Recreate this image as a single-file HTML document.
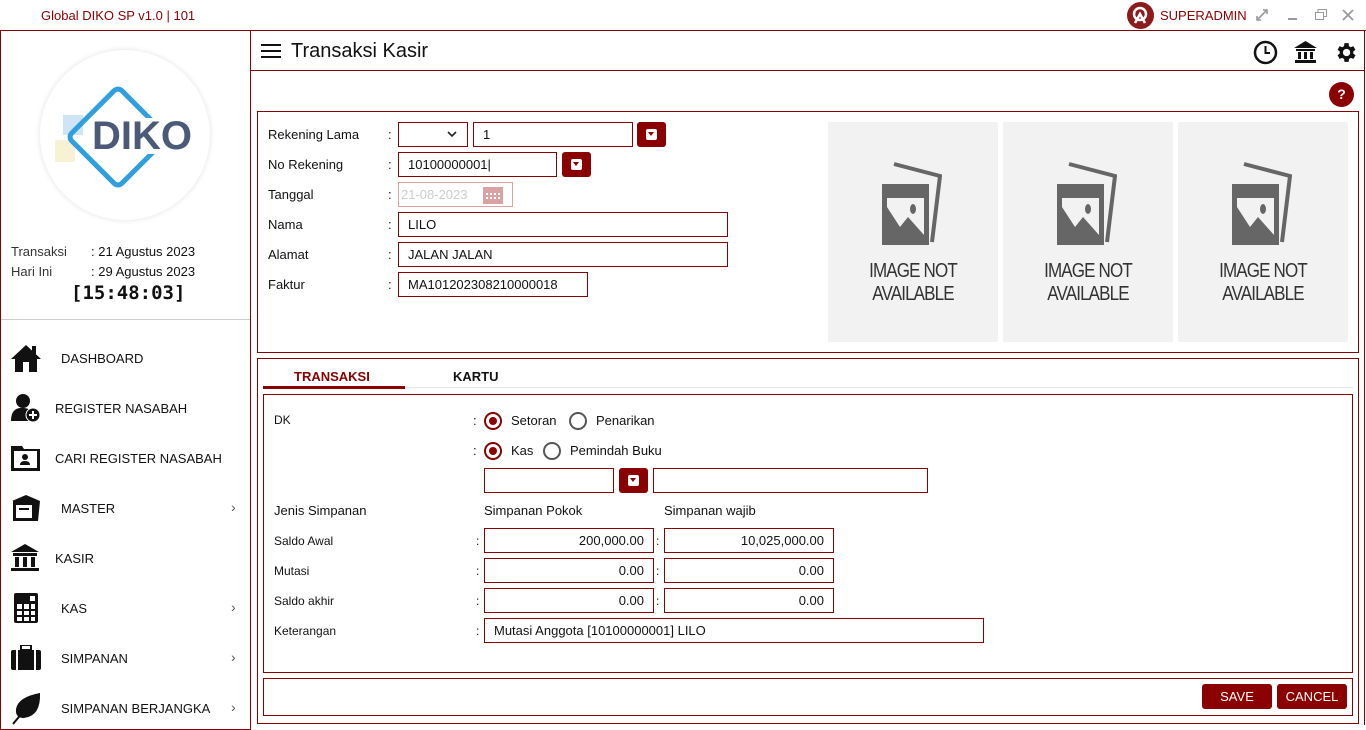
<!DOCTYPE html>
<html><head><meta charset="utf-8">
<style>
*{box-sizing:border-box;margin:0;padding:0}
body{width:1366px;height:725px;overflow:hidden;background:#fff;font-family:"Liberation Sans",sans-serif;font-size:13px;color:#111;position:relative}
.a{position:absolute}
.box{position:absolute;border:1px solid #8b0000;background:#fff}
.inp{position:absolute;border:1px solid #8b0000;background:#fff;height:25px;line-height:23px;padding:0 9px;font-size:13px;color:#111}
.r{text-align:right}
.btn{position:absolute;background:#8b0000;border-radius:3px;width:29px;height:25px}
.btn::after{content:"";position:absolute;left:9px;top:7px;width:11px;height:11px;background:#fff;border-radius:2px}
.btn i{position:absolute;left:11px;top:10px;width:0;height:0;border-left:3.5px solid transparent;border-right:3.5px solid transparent;border-top:4px solid #8b0000;z-index:2}
.lbl{position:absolute;font-size:13px}
.sm{font-size:12px}
.menu{position:absolute;left:0;font-size:13px;color:#111}
.chev{position:absolute;left:231px;color:#555;font-size:14px}
.radio{position:absolute;width:18px;height:18px;border-radius:50%;border:2px solid #8b0000}
.radio.on::after{content:"";position:absolute;left:3px;top:3px;width:8px;height:8px;border-radius:50%;background:#8b0000}
.radio.off{border-color:#555}
.ph{position:absolute;top:122px;width:170px;height:220px;background:#f2f2f2;text-align:center}
.ph .t{position:absolute;left:0;width:100%;top:138px;font-size:20px;line-height:23px;color:#333;letter-spacing:-1px;transform:scaleX(.85)}
</style></head><body>
<!-- title bar -->
<div class="a" style="left:41px;top:8px;color:#8b0000;font-size:13px">Global DIKO SP v1.0 | 101</div>
<div class="a" style="left:1127px;top:2px;width:27px;height:27px;border-radius:50%;background:#8e1b1b"></div>
<svg class="a" style="left:1130px;top:5px" width="21" height="21" viewBox="0 0 21 21"><circle cx="10" cy="9" r="6" fill="none" stroke="#fff" stroke-width="2.5"/><path d="M5 18 L10 9 L15 18" fill="none" stroke="#fff" stroke-width="2.5"/></svg>
<div class="a" style="left:1160px;top:8px;color:#8b0000;font-size:13px">SUPERADMIN</div>
<svg class="a" style="left:1256px;top:9px" width="12" height="12" viewBox="0 0 12 12"><path d="M1 11 L11 1 M7 1 H11 V5 M1 7 V11 H5" stroke="#999" stroke-width="1.6" fill="none"/></svg>
<div class="a" style="left:1288px;top:18px;width:9px;height:2px;background:#999"></div>
<svg class="a" style="left:1315px;top:9px" width="12" height="11"><rect x="0.5" y="3.5" width="8" height="7" fill="none" stroke="#999"/><path d="M3 3.5 V0.5 H11.5 V7.5 H8.5" fill="none" stroke="#999"/></svg>
<svg class="a" style="left:1342px;top:9px" width="12" height="12"><path d="M1 1 L11 11 M11 1 L1 11" stroke="#999" stroke-width="1.8"/></svg>

<!-- sidebar -->
<div class="a" style="left:0;top:30px;width:251px;height:700px;border:1px solid #8b0000"></div>
<div class="a" style="left:40px;top:50px;width:170px;height:170px;border-radius:50%;background:#fff;box-shadow:0 0 6px rgba(0,0,0,.12)"></div>
<div class="a" style="left:63px;top:115px;width:20px;height:20px;background:#cfe5f7"></div>
<div class="a" style="left:55px;top:140px;width:20px;height:22px;background:#f7f2d5"></div>
<div class="a" style="left:80px;top:99px;width:76px;height:76px;transform:rotate(45deg);border:5px solid #2f9fe0;border-radius:8px"></div>
<div class="a" style="left:91px;top:118px;font-size:40px;line-height:36px;font-weight:bold;color:#4a5a78;background:#fff;padding:0 1px">DIKO</div>
<div class="a" style="left:11px;top:244px;color:#333">Transaksi</div>
<div class="a" style="left:91px;top:244px">: 21 Agustus 2023</div>
<div class="a" style="left:11px;top:264px;color:#333">Hari Ini</div>
<div class="a" style="left:91px;top:264px">: 29 Agustus 2023</div>
<div class="a" style="left:71px;top:282px;font-size:19px;font-weight:bold;font-family:'DejaVu Sans Mono','Liberation Mono',monospace">[15:48:03]</div>
<div class="a" style="left:1px;top:319px;width:249px;height:1px;background:#ccc"></div>

<!-- menu icons -->
<svg class="a" style="left:10px;top:343px" width="32" height="30" viewBox="0 0 32 30"><path d="M16 2 L31 16 L27 16 L27 29 L5 29 L5 16 L1 16 Z" fill="#111"/><rect x="22" y="3" width="4" height="8" fill="#111"/><rect x="13" y="19" width="6" height="10" fill="#fff"/></svg>
<div class="menu" style="left:61px;top:351px">DASHBOARD</div>
<svg class="a" style="left:10px;top:393px" width="32" height="30"><circle cx="13" cy="8" r="7" fill="#111"/><path d="M1 28 Q1 14 13 15 Q22 15 22 22 L22 28 Z" fill="#111"/><circle cx="23" cy="22" r="7" fill="#111" stroke="#fff" stroke-width="1"/><path d="M23 18 V26 M19 22 H27" stroke="#fff" stroke-width="2"/></svg>
<div class="menu" style="left:55px;top:401px">REGISTER NASABAH</div>
<svg class="a" style="left:10px;top:444px" width="32" height="28"><path d="M1 2 H12 L14 5 H30 V27 H1 Z" fill="#111"/><rect x="4" y="7" width="23" height="17" fill="#fff"/><circle cx="15" cy="13" r="3" fill="#111"/><path d="M10 21 Q10 17 15 17 Q20 17 20 21 Z" fill="#111"/></svg>
<div class="menu" style="left:55px;top:451px">CARI REGISTER NASABAH</div>
<svg class="a" style="left:10px;top:493px" width="32" height="30"><path d="M3 8 H30 L28 28 H3 Z" fill="#111"/><path d="M2 8 L16 2 L30 8" fill="#111"/><rect x="6" y="12" width="16" height="13" fill="#fff"/><rect x="9" y="15" width="10" height="2" fill="#111"/></svg>
<div class="menu" style="left:61px;top:501px">MASTER</div><div class="chev" style="top:499px">›</div>
<svg class="a" style="left:10px;top:543px" width="30" height="30"><path d="M15 1 L29 9 H1 Z" fill="#111"/><rect x="3" y="10" width="24" height="3" fill="#111"/><rect x="5" y="14" width="4" height="10" fill="#111"/><rect x="13" y="14" width="4" height="10" fill="#111"/><rect x="21" y="14" width="4" height="10" fill="#111"/><rect x="1" y="25" width="28" height="3" fill="#111"/></svg>
<div class="menu" style="left:55px;top:551px">KASIR</div>
<svg class="a" style="left:14px;top:593px" width="24" height="30"><rect x="0" y="0" width="24" height="30" rx="2" fill="#111"/><rect x="16" y="3" width="5" height="5" fill="#fff"/><g fill="#fff"><rect x="3" y="11" width="5" height="5"/><rect x="10" y="11" width="5" height="5"/><rect x="17" y="11" width="4" height="5"/><rect x="3" y="18" width="5" height="4"/><rect x="10" y="18" width="5" height="4"/><rect x="17" y="18" width="4" height="4"/><rect x="3" y="24" width="5" height="4"/><rect x="10" y="24" width="5" height="4"/><rect x="17" y="24" width="4" height="4"/></g></svg>
<div class="menu" style="left:61px;top:601px">KAS</div><div class="chev" style="top:599px">›</div>
<svg class="a" style="left:10px;top:645px" width="32" height="26"><rect x="11" y="0" width="10" height="5" fill="none" stroke="#111" stroke-width="2"/><rect x="1" y="5" width="30" height="20" rx="2" fill="#111"/><rect x="6" y="5" width="2" height="20" fill="#fff"/><rect x="24" y="5" width="2" height="20" fill="#fff"/></svg>
<div class="menu" style="left:61px;top:651px">SIMPANAN</div><div class="chev" style="top:649px">›</div>
<svg class="a" style="left:12px;top:692px" width="30" height="33"><path d="M28 1 Q29 24 12 26 Q3 26 4 17 Q6 5 28 1 Z" fill="#111"/><path d="M1 32 L16 14" stroke="#111" stroke-width="2"/></svg>
<div class="menu" style="left:61px;top:701px">SIMPANAN BERJANGKA</div><div class="chev" style="top:699px">›</div>

<!-- main header -->
<div class="a" style="left:250px;top:30px;width:1116px;height:1px;background:#8b0000"></div>
<div class="a" style="left:1364px;top:30px;width:1px;height:695px;background:#8b0000"></div>
<div class="a" style="left:250px;top:70px;width:1115px;height:1px;background:#8b0000"></div>
<div class="a" style="left:261px;top:44px;width:20px;height:2px;background:#111;box-shadow:0 6px 0 #111,0 12px 0 #111"></div>
<div class="a" style="left:291px;top:40px;font-size:20px;color:#111">Transaksi Kasir</div>
<svg class="a" style="left:1253px;top:40px" width="25" height="25"><circle cx="12.5" cy="12.5" r="10.5" fill="none" stroke="#111" stroke-width="2.5"/><path d="M12.5 6 V13 H17" stroke="#111" stroke-width="2" fill="none"/></svg>
<svg class="a" style="left:1293px;top:40px" width="25" height="24"><path d="M12.5 1 L24 8 H1 Z" fill="#111"/><rect x="3" y="9" width="19" height="2" fill="#111"/><rect x="5" y="12" width="3" height="7" fill="#111"/><rect x="11" y="12" width="3" height="7" fill="#111"/><rect x="17" y="12" width="3" height="7" fill="#111"/><rect x="2" y="20" width="21" height="3" fill="#111"/></svg>
<svg class="a" style="left:1333px;top:40px" width="25" height="25" viewBox="0 0 24 24"><path fill="#111" d="M19.4 13a7.5 7.5 0 0 0 0-2l2.1-1.6-2-3.5-2.5 1a7.6 7.6 0 0 0-1.7-1L15 3h-4l-.4 2.9a7.6 7.6 0 0 0-1.7 1l-2.5-1-2 3.5L6.5 11a7.5 7.5 0 0 0 0 2l-2.1 1.6 2 3.5 2.5-1a7.6 7.6 0 0 0 1.7 1L11 21h4l.4-2.9a7.6 7.6 0 0 0 1.7-1l2.5 1 2-3.5zM13 15.5a3.5 3.5 0 1 1 0-7 3.5 3.5 0 0 1 0 7z"/></svg>
<div class="a" style="left:1329px;top:82px;width:25px;height:25px;border-radius:50%;background:#8b0000;color:#fff;font-weight:bold;font-size:14px;text-align:center;line-height:25px">?</div>

<!-- top panel -->
<div class="box" style="left:257px;top:111px;width:1102px;height:242px"></div>
<div class="lbl" style="left:268px;top:127px">Rekening Lama</div><div class="lbl" style="left:388px;top:127px">:</div>
<div class="inp" style="left:398px;top:122px;width:70px"></div>
<svg class="a" style="left:447px;top:131px" width="10" height="7"><path d="M1 1 L5 5 L9 1" stroke="#222" stroke-width="1.6" fill="none"/></svg>
<div class="inp" style="left:473px;top:122px;width:160px">1</div>
<div class="btn" style="left:637px;top:122px"><i></i></div>
<div class="lbl" style="left:268px;top:157px">No Rekening</div><div class="lbl" style="left:388px;top:157px">:</div>
<div class="inp" style="left:398px;top:152px;width:159px">10100000001|</div>
<div class="btn" style="left:562px;top:152px"><i></i></div>
<div class="lbl" style="left:268px;top:187px">Tanggal</div><div class="lbl" style="left:388px;top:187px">:</div>
<div class="inp" style="left:398px;top:182px;width:115px;border-color:#e0a0a0;color:#ccc;padding-left:2px">21-08-2023</div>
<svg class="a" style="left:483px;top:185px" width="20" height="19"><rect x="0" y="2" width="20" height="17" fill="#d9a3a3"/><g fill="#fff"><rect x="3" y="8" width="2" height="2"/><rect x="7" y="8" width="2" height="2"/><rect x="11" y="8" width="2" height="2"/><rect x="15" y="8" width="2" height="2"/><rect x="3" y="12" width="2" height="2"/><rect x="7" y="12" width="2" height="2"/><rect x="11" y="12" width="2" height="2"/><rect x="15" y="12" width="2" height="2"/></g></svg>
<div class="lbl" style="left:268px;top:217px">Nama</div><div class="lbl" style="left:388px;top:217px">:</div>
<div class="inp" style="left:398px;top:212px;width:330px">LILO</div>
<div class="lbl" style="left:268px;top:247px">Alamat</div><div class="lbl" style="left:388px;top:247px">:</div>
<div class="inp" style="left:398px;top:242px;width:330px">JALAN JALAN</div>
<div class="lbl" style="left:268px;top:277px">Faktur</div><div class="lbl" style="left:388px;top:277px">:</div>
<div class="inp" style="left:398px;top:272px;width:190px">MA101202308210000018</div>

<div class="ph" style="left:828px"><svg class="a" style="left:52px;top:40px" width="62" height="85"><path d="M14 2 L60 14 L52 80" fill="none" stroke="#666" stroke-width="4"/><rect x="2" y="22" width="47" height="61" fill="#666"/><rect x="7" y="30" width="37" height="47" fill="#f2f2f2"/><path d="M7 77 V45 L20 65 L28 55 L44 73 V77 Z" fill="#666"/><rect x="7" y="30" width="37" height="6" fill="#666"/><ellipse cx="33" cy="47" rx="3" ry="5" fill="#666"/></svg><div class="t">IMAGE NOT<br>AVAILABLE</div></div>
<div class="ph" style="left:1003px"><svg class="a" style="left:52px;top:40px" width="62" height="85"><path d="M14 2 L60 14 L52 80" fill="none" stroke="#666" stroke-width="4"/><rect x="2" y="22" width="47" height="61" fill="#666"/><rect x="7" y="30" width="37" height="47" fill="#f2f2f2"/><path d="M7 77 V45 L20 65 L28 55 L44 73 V77 Z" fill="#666"/><rect x="7" y="30" width="37" height="6" fill="#666"/><ellipse cx="33" cy="47" rx="3" ry="5" fill="#666"/></svg><div class="t">IMAGE NOT<br>AVAILABLE</div></div>
<div class="ph" style="left:1178px"><svg class="a" style="left:52px;top:40px" width="62" height="85"><path d="M14 2 L60 14 L52 80" fill="none" stroke="#666" stroke-width="4"/><rect x="2" y="22" width="47" height="61" fill="#666"/><rect x="7" y="30" width="37" height="47" fill="#f2f2f2"/><path d="M7 77 V45 L20 65 L28 55 L44 73 V77 Z" fill="#666"/><rect x="7" y="30" width="37" height="6" fill="#666"/><ellipse cx="33" cy="47" rx="3" ry="5" fill="#666"/></svg><div class="t">IMAGE NOT<br>AVAILABLE</div></div>

<!-- bottom panel -->
<div class="box" style="left:257px;top:358px;width:1102px;height:366px"></div>
<div class="a" style="left:263px;top:387px;width:1090px;height:1px;background:#e4e4e4"></div>
<div class="a" style="left:263px;top:386px;width:142px;height:3px;background:#8b0000"></div>
<div class="a" style="left:294px;top:369px;font-weight:bold;color:#8b0000;font-size:13px">TRANSAKSI</div>
<div class="a" style="left:453px;top:369px;font-weight:bold;color:#111;font-size:13px">KARTU</div>
<div class="box" style="left:263px;top:394px;width:1090px;height:279px"></div>
<div class="box" style="left:263px;top:678px;width:1090px;height:38px"></div>

<div class="lbl sm" style="left:274px;top:413px">DK</div>
<div class="lbl" style="left:473px;top:413px">:</div>
<div class="radio on" style="left:484px;top:412px"></div><div class="lbl" style="left:511px;top:413px">Setoran</div>
<div class="radio off" style="left:569px;top:412px"></div><div class="lbl" style="left:596px;top:413px">Penarikan</div>
<div class="lbl" style="left:473px;top:443px">:</div>
<div class="radio on" style="left:484px;top:442px"></div><div class="lbl" style="left:511px;top:443px">Kas</div>
<div class="radio off" style="left:543px;top:442px"></div><div class="lbl" style="left:570px;top:443px">Pemindah Buku</div>
<div class="inp" style="left:484px;top:468px;width:130px"></div>
<div class="btn" style="left:619px;top:468px"><i></i></div>
<div class="inp" style="left:653px;top:468px;width:275px"></div>

<div class="lbl" style="left:274px;top:503px">Jenis Simpanan</div>
<div class="lbl" style="left:484px;top:503px">Simpanan Pokok</div>
<div class="lbl" style="left:664px;top:503px">Simpanan wajib</div>

<div class="lbl sm" style="left:274px;top:534px">Saldo Awal</div><div class="lbl sm" style="left:476px;top:534px">:</div>
<div class="inp r" style="left:484px;top:528px;width:170px">200,000.00</div><div class="lbl sm" style="left:656px;top:534px">:</div>
<div class="inp r" style="left:664px;top:528px;width:170px">10,025,000.00</div>
<div class="lbl sm" style="left:274px;top:564px">Mutasi</div><div class="lbl sm" style="left:476px;top:564px">:</div>
<div class="inp r" style="left:484px;top:558px;width:170px">0.00</div><div class="lbl sm" style="left:656px;top:564px">:</div>
<div class="inp r" style="left:664px;top:558px;width:170px">0.00</div>
<div class="lbl sm" style="left:274px;top:594px">Saldo akhir</div><div class="lbl sm" style="left:476px;top:594px">:</div>
<div class="inp r" style="left:484px;top:588px;width:170px">0.00</div><div class="lbl sm" style="left:656px;top:594px">:</div>
<div class="inp r" style="left:664px;top:588px;width:170px">0.00</div>
<div class="lbl sm" style="left:274px;top:624px">Keterangan</div><div class="lbl sm" style="left:476px;top:624px">:</div>
<div class="inp" style="left:484px;top:618px;width:500px">Mutasi Anggota [10100000001] LILO</div>

<div class="a" style="left:1202px;top:684px;width:70px;height:25px;background:#8b0000;border-radius:3px;color:#fff;text-align:center;line-height:25px">SAVE</div>
<div class="a" style="left:1277px;top:684px;width:70px;height:25px;background:#8b0000;border-radius:3px;color:#fff;text-align:center;line-height:25px">CANCEL</div>
</body></html>
